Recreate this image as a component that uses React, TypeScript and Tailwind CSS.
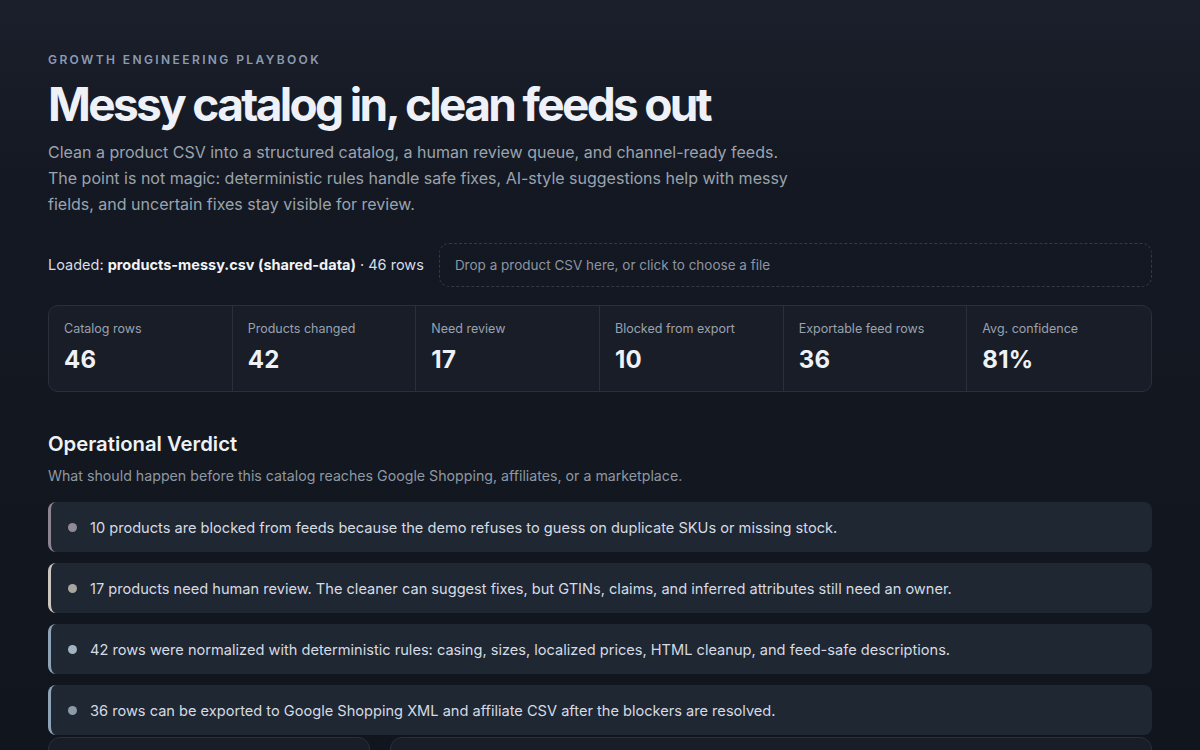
import React from "react";

const STATS = [
  { label: "Catalog rows", value: "46" },
  { label: "Products changed", value: "42" },
  { label: "Need review", value: "17" },
  { label: "Blocked from export", value: "10" },
  { label: "Exportable feed rows", value: "36" },
  { label: "Avg. confidence", value: "81%" },
];

const VERDICTS = [
  {
    text: "10 products are blocked from feeds because the demo refuses to guess on duplicate SKUs or missing stock.",
    border: "border-l-[#8c8491]",
    dot: "bg-[#8f8a93]",
  },
  {
    text: "17 products need human review. The cleaner can suggest fixes, but GTINs, claims, and inferred attributes still need an owner.",
    border: "border-l-[#c9c7c0]",
    dot: "bg-[#a9a69f]",
  },
  {
    text: "42 rows were normalized with deterministic rules: casing, sizes, localized prices, HTML cleanup, and feed-safe descriptions.",
    border: "border-l-[#8fa3b6]",
    dot: "bg-[#a4b3c2]",
  },
  {
    text: "36 rows can be exported to Google Shopping XML and affiliate CSV after the blockers are resolved.",
    border: "border-l-[#8fa3b6]",
    dot: "bg-[#8d9aa8]",
  },
];

const StatCell = ({ label, value, last }: { label: string; value: string; last: boolean }) => (
  <div className={`px-[15px] pt-[15px] pb-[16px] ${last ? "" : "border-r border-[#2a303b]"}`}>
    <p className="text-[12.5px] leading-[16px] text-[#9aa2ae]">{label}</p>
    <p className="mt-[8px] text-[24px] leading-[30px] font-bold tracking-[0.01em] text-[#eef1f6]">{value}</p>
  </div>
);

export default function App() {
  return (
    <div className="min-h-[750px] h-[750px] overflow-hidden bg-[linear-gradient(180deg,#1a1f2b_0px,#131822_180px,#11161e_100%)] font-['Inter','Noto_Sans',sans-serif] text-[#e6e9ef]">
      <main className="px-[48px] pt-[53px]">
        <p className="text-[12px] leading-[14px] font-semibold tracking-[0.2em] text-[#8d9bb0]">
          GROWTH ENGINEERING PLAYBOOK
        </p>
        <h1 className="mt-[8px] text-[46px] leading-[58px] font-bold tracking-[-0.058em] text-[#eef1f7]">
          Messy catalog in, clean feeds out
        </h1>
        <p className="mt-[6px] max-w-[745px] text-[16px] leading-[26px] text-[#9ba3ae]">
          Clean a product CSV into a structured catalog, a human review queue, and channel-ready feeds. The point is
          not magic: deterministic rules handle safe fixes, AI-style suggestions help with messy fields, and uncertain
          fixes stay visible for review.
        </p>

        <div className="mt-[26px] flex items-center gap-[15px]">
          <p className="shrink-0 text-[14.5px] text-[#d9dde4]">
            Loaded: <span className="font-bold text-[#f1f3f7]">products-messy.csv (shared-data)</span> · 46 rows
          </p>
          <div className="flex h-[44px] flex-1 items-center rounded-[10px] border border-dashed border-[#333a46] px-[15px] text-[13.5px] text-[#8d95a1]">
            Drop a product CSV here, or click to choose a file
          </div>
        </div>

        <div className="mt-[18px] grid grid-cols-6 overflow-hidden rounded-[10px] border border-[#2a303b] bg-[#181d27]">
          {STATS.map((s, i) => (
            <StatCell key={s.label} label={s.label} value={s.value} last={i === STATS.length - 1} />
          ))}
        </div>

        <h2 className="mt-[39px] text-[20.3px] leading-[26px] font-semibold text-[#eef1f6]">Operational Verdict</h2>
        <p className="mt-[9px] text-[14.2px] leading-[20px] text-[#8f97a3]">
          What should happen before this catalog reaches Google Shopping, affiliates, or a marketplace.
        </p>

        <ul className="mt-[16px] flex flex-col gap-[11px]">
          {VERDICTS.map((v) => (
            <li
              key={v.text}
              className={`flex h-[50px] items-center gap-[13px] rounded-[8px] border-l-[3px] bg-[#1f2733] pl-[17px] text-[14.6px] leading-[20px] text-[#d6dbe3] ${v.border}`}
            >
              <span className={`h-[9px] w-[9px] shrink-0 rounded-full ${v.dot}`} />
              <span className="pt-[1px]">{v.text}</span>
            </li>
          ))}
        </ul>

        <div className="mt-[2px] flex gap-[20px]">
          <div className="h-[60px] w-[322px] rounded-[12px] border border-[#2a303b] bg-[#181d27]" />
          <div className="h-[60px] flex-1 rounded-[12px] border border-[#2a303b] bg-[#181d27]" />
        </div>
      </main>
    </div>
  );
}
